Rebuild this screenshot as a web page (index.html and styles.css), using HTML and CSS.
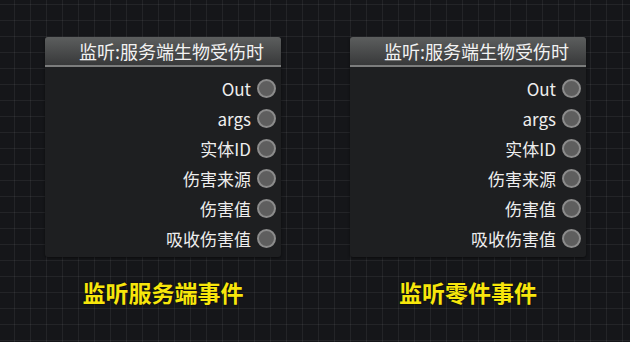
FILE: index.html
```html
<!DOCTYPE html>
<html lang="zh-CN">
<head>
    <meta charset="UTF-8">
    <meta name="viewport" content="width=device-width, initial-scale=1.0">
    <title>事件节点</title>
    <link rel="stylesheet" href="styles.css">
</head>
<body>
    <div class="canvas">
        <div class="group">
            <div class="node">
                <div class="node-title">监听:服务端生物受伤时</div>
                <div class="node-body">
                    <div class="pin"><span>Out</span><i class="dot"></i></div>
                    <div class="pin"><span>args</span><i class="dot"></i></div>
                    <div class="pin"><span>实体ID</span><i class="dot"></i></div>
                    <div class="pin"><span>伤害来源</span><i class="dot"></i></div>
                    <div class="pin"><span>伤害值</span><i class="dot"></i></div>
                    <div class="pin"><span>吸收伤害值</span><i class="dot"></i></div>
                </div>
            </div>
            <div class="label">监听服务端事件</div>
        </div>
        <div class="group">
            <div class="node">
                <div class="node-title">监听:服务端生物受伤时</div>
                <div class="node-body">
                    <div class="pin"><span>Out</span><i class="dot"></i></div>
                    <div class="pin"><span>args</span><i class="dot"></i></div>
                    <div class="pin"><span>实体ID</span><i class="dot"></i></div>
                    <div class="pin"><span>伤害来源</span><i class="dot"></i></div>
                    <div class="pin"><span>伤害值</span><i class="dot"></i></div>
                    <div class="pin"><span>吸收伤害值</span><i class="dot"></i></div>
                </div>
            </div>
            <div class="label">监听零件事件</div>
        </div>
    </div>
</body>
</html>
```

FILE: styles.css
```css
html, body {
    height: 100%;
}

body {
    margin: 0;
    font-family: "Noto Sans CJK SC", "Noto Sans", sans-serif;
    color: #eee;
    background-color: #151619;
    background-image:
        linear-gradient(to right, rgba(255, 255, 255, 0.06) 1px, transparent 1px),
        linear-gradient(to bottom, rgba(255, 255, 255, 0.06) 1px, transparent 1px);
    background-size: 16px 16px;
    background-position: 14px 4px;
}

.canvas {
    display: flex;
    gap: 69px;
    padding: 37px 0 0 45px;
}

.group {
    display: flex;
    flex-direction: column;
    align-items: center;
    width: 236px;
}

.node {
    width: 100%;
    border-radius: 3px;
    overflow: hidden;
    background: #1e1f21;
    box-shadow: 0 1px 3px rgba(0, 0, 0, 0.5);
}

.node-title {
    height: 28px;
    line-height: 28px;
    padding-right: 17px;
    text-align: right;
    font-size: 18px;
    color: #f2f2f2;
    background: linear-gradient(to bottom, #5c5e5e, #38393a);
    border-bottom: 2px solid #7c7d7d;
}

.node-body {
    padding: 6px 5px 4px 0;
}

.pin {
    display: flex;
    justify-content: flex-end;
    align-items: center;
    gap: 6px;
    height: 30px;
    font-size: 17px;
}

.pin span {
    line-height: 30px;
    margin-top: 2px;
}

.dot {
    width: 15px;
    height: 15px;
    border-radius: 50%;
    background: #5e5e5e;
    border: 2px solid #8c8c8c;
}

.label {
    margin-top: 18px;
    font-size: 23px;
    font-weight: bold;
    color: #f7e60c;
    text-shadow: 0 0 2px #000;
}
```
